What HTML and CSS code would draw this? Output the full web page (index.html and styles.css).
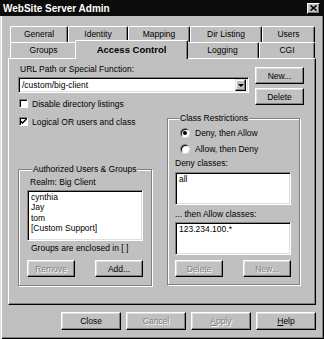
FILE: index.html
```html
<!DOCTYPE html>
<html lang="en">
<head>
    <meta charset="UTF-8">
    <title>WebSite Server Admin</title>
    <link rel="stylesheet" href="styles.css">
</head>
<body>

    <div class="titlebar">
        <span>WebSite Server Admin</span>
        <span class="close-btn">
            <svg width="7" height="6" viewBox="0 0 7 6"><path d="M0.5 0.5 L6.5 5.5 M6.5 0.5 L0.5 5.5" stroke="#000" stroke-width="1.6"/></svg>
        </span>
    </div>

    <div class="frame">
        <div class="tab-row">
            <div class="tab w-general">General</div>
            <div class="tab w-identity">Identity</div>
            <div class="tab w-mapping">Mapping</div>
            <div class="tab w-dir">Dir Listing</div>
            <div class="tab w-users">Users</div>
        </div>
        <div class="tab-row">
            <div class="tab w-groups">Groups</div>
            <div class="tab tab-active w-access">Access Control</div>
            <div class="tab w-logging">Logging</div>
            <div class="tab w-cgi">CGI</div>
        </div>

        <div class="panel">
            <div class="col-left">
                <div class="field-label">URL Path or Special Function:</div>
                <div class="combo sunken">
                    <span>/custom/big-client</span>
                    <span class="combo-arrow"><span class="tri"></span></span>
                </div>
                <div class="check-row first">
                    <span class="checkbox"></span>
                    <span>Disable directory listings</span>
                </div>
                <div class="check-row">
                    <span class="checkbox">
                        <svg width="7" height="7" viewBox="0 0 7 7"><path d="M0.5 3 L2.5 5 L6.5 1" stroke="#000" stroke-width="1.5" fill="none"/></svg>
                    </span>
                    <span>Logical OR users and class</span>
                </div>

                <div class="group auth-group">
                    <div class="group-title">Authorized Users &amp; Groups</div>
                    <div class="realm">Realm: Big Client</div>
                    <div class="listbox sunken">
                        <div>cynthia</div>
                        <div>Jay</div>
                        <div>tom</div>
                        <div>[Custom Support]</div>
                    </div>
                    <div class="note">Groups are enclosed in [ ]</div>
                    <div class="btn-pair">
                        <button class="btn small disabled">Remove</button>
                        <button class="btn small">Add...</button>
                    </div>
                </div>
            </div>

            <div class="col-right">
                <div class="side-btns">
                    <button class="btn side">New...</button>
                    <button class="btn side">Delete</button>
                </div>

                <div class="group class-group">
                    <div class="group-title">Class Restrictions</div>
                    <div class="radio-row first">
                        <span class="radio checked"></span>
                        <span>Deny, then Allow</span>
                    </div>
                    <div class="radio-row">
                        <span class="radio"></span>
                        <span>Allow, then Deny</span>
                    </div>
                    <div class="sub-label deny-label">Deny classes:</div>
                    <div class="textbox sunken">all</div>
                    <div class="sub-label allow-label">... then Allow classes:</div>
                    <div class="textbox sunken allow-box">123.234.100.*</div>
                    <div class="btn-pair">
                        <button class="btn small disabled">Delete</button>
                        <button class="btn small disabled">New...</button>
                    </div>
                </div>
            </div>
        </div>

        <div class="bottom-btns">
            <button class="btn wide">Close</button>
            <button class="btn wide disabled">Cancel</button>
            <button class="btn wide disabled"><u>A</u>pply</button>
            <button class="btn wide"><u>H</u>elp</button>
        </div>
    </div>

</body>
</html>
```

FILE: styles.css
```css
body {
    margin: 0;
    width: 324px;
    height: 339px;
    background: #c0c0c0;
    font-family: "Liberation Sans", Arial, sans-serif;
    font-size: 8.5px;
    color: #000;
    overflow: hidden;
}
.titlebar {
    height: 16px;
    background: #0c0c0c;
    color: #fff;
    font-weight: bold;
    font-size: 10px;
    display: flex;
    align-items: center;
    justify-content: space-between;
    padding: 0 4px 0 3px;
}
.close-btn {
    box-sizing: border-box;
    width: 13px;
    height: 11px;
    background: #c0c0c0;
    border: 1px solid;
    border-color: #fff #000 #000 #fff;
    box-shadow: inset -1px -1px #808080;
    display: flex;
    align-items: center;
    justify-content: center;
}
.frame {
    box-sizing: border-box;
    height: 323px;
    padding: 10px 8px 0 8px;
    box-shadow: inset 1px 0 #dfdfdf, inset 2px 0 #fff, inset -1px -1px #000, inset -2px -2px #808080;
}

/* tabs */
.tab-row {
    display: flex;
    height: 16px;
    padding-left: 2px;
}
.tab {
    box-sizing: border-box;
    height: 16px;
    border: 1px solid;
    border-color: #fff #000 transparent #fff;
    border-bottom: none;
    border-radius: 2px 2px 0 0;
    box-shadow: inset -1px 0 #808080;
    text-align: center;
    line-height: 15px;
}
.tab-active {
    height: 19px;
    margin: -2px -2px -1px -2px;
    font-weight: bold;
    font-size: 9.5px;
    line-height: 17px;
    background: #c0c0c0;
    z-index: 2;
}
.w-general { width: 58px; }
.w-identity { width: 60px; }
.w-mapping { width: 62px; }
.w-dir { width: 72px; }
.w-users { width: 53px; }
.w-groups { width: 67px; }
.w-access { width: 113px; }
.w-logging { width: 73px; }
.w-cgi { width: 56px; }

.panel {
    box-sizing: border-box;
    height: 247px;
    border: 1px solid;
    border-color: #fff #000 #000 #fff;
    box-shadow: inset -1px -1px #808080;
    padding: 5px 0 0 9px;
    display: flex;
}
.col-left {
    width: 134px;
}
.col-right {
    width: 137px;
    margin-left: 15px;
}

/* common controls */
.sunken {
    box-sizing: border-box;
    background: #fff;
    border: 1px solid;
    border-color: #808080 #fff #fff #808080;
    box-shadow: inset 1px 1px #000, inset -1px -1px #dfdfdf;
}
.btn {
    box-sizing: border-box;
    background: #c0c0c0;
    border: 1px solid;
    border-color: #fff #000 #000 #fff;
    box-shadow: inset -1px -1px #808080, inset 1px 1px #dfdfdf;
    font-family: inherit;
    font-size: 8.5px;
    color: #000;
    padding: 0;
    height: 17px;
}
.btn.disabled {
    color: #808080;
    text-shadow: 1px 1px #fff;
}
.btn.small { width: 48px; }
.btn.side { width: 49px; display: block; }
.btn.wide { width: 60px; height: 18px; }

.field-label {
    padding-left: 2px;
    line-height: 11px;
}
.combo {
    width: 231px;
    height: 16px;
    margin-top: 2px;
    display: flex;
    align-items: center;
    justify-content: space-between;
    padding: 0 2px 0 3px;
}
.combo-arrow {
    box-sizing: border-box;
    width: 11px;
    height: 12px;
    background: #c0c0c0;
    border: 1px solid;
    border-color: #dfdfdf #000 #000 #dfdfdf;
    box-shadow: inset -1px -1px #808080, inset 1px 1px #fff;
    display: flex;
    align-items: center;
    justify-content: center;
}
.tri {
    width: 0;
    height: 0;
    border-left: 3px solid transparent;
    border-right: 3px solid transparent;
    border-top: 3px solid #000;
}

.check-row {
    display: flex;
    align-items: center;
    gap: 4px;
    height: 11px;
    padding-left: 1px;
    margin-top: 7px;
}
.check-row.first { margin-top: 5px; }
.checkbox {
    box-sizing: border-box;
    width: 9px;
    height: 9px;
    background: #fff;
    border: 1px solid;
    border-color: #808080 #fff #fff #808080;
    box-shadow: inset 1px 1px #000;
    display: flex;
    align-items: center;
    justify-content: center;
}

/* group boxes */
.group {
    box-sizing: border-box;
    border: 1px solid #808080;
    box-shadow: inset 1px 1px #fff, 1px 1px #fff;
}
.group-title {
    width: fit-content;
    line-height: 11px;
    margin-top: -6px;
    padding: 0 1px;
    background: #c0c0c0;
}
.btn-pair {
    display: flex;
    justify-content: space-between;
}

.auth-group {
    width: 134px;
    height: 117px;
    margin-top: 42px;
    padding: 0 8px;
}
.auth-group .group-title { margin-left: 5px; }
.realm {
    line-height: 11px;
    margin-top: 2px;
    padding-left: 3px;
}
.listbox {
    height: 51px;
    margin-top: 2px;
    padding: 1px 3px;
    line-height: 10.3px;
}
.note {
    line-height: 11px;
    margin-top: 2px;
    padding-left: 4px;
}
.auth-group .btn-pair { margin-top: 6px; }

.side-btns {
    margin: 3px 0 0 88px;
    display: flex;
    flex-direction: column;
    gap: 4px;
}
.class-group {
    width: 133px;
    height: 167px;
    margin-top: 13px;
    padding: 0 8px 0 7px;
}
.class-group .group-title { margin-left: 4px; }
.radio-row {
    display: flex;
    align-items: center;
    gap: 5px;
    height: 11px;
    padding-left: 5px;
    margin-top: 5px;
}
.radio-row.first { margin-top: 3px; }
.radio {
    box-sizing: border-box;
    width: 10px;
    height: 10px;
    border-radius: 50%;
    background: #fff;
    border: 1px solid;
    border-color: #808080 #dfdfdf #dfdfdf #808080;
    box-shadow: inset 1px 1px #000;
    display: flex;
    align-items: center;
    justify-content: center;
}
.radio.checked::after {
    content: "";
    width: 4px;
    height: 4px;
    border-radius: 50%;
    background: #000;
}
.sub-label {
    line-height: 11px;
}
.deny-label { margin-top: 4px; }
.allow-label { margin-top: 4px; }
.textbox {
    width: 116px;
    height: 33px;
    margin-top: 3px;
    padding: 1px 3px;
    line-height: 11px;
}
.allow-box { margin-top: 2px; }
.class-group .btn-pair { margin-top: 5px; }

.bottom-btns {
    display: flex;
    justify-content: flex-end;
    gap: 5px;
    margin-top: 7px;
}
```
